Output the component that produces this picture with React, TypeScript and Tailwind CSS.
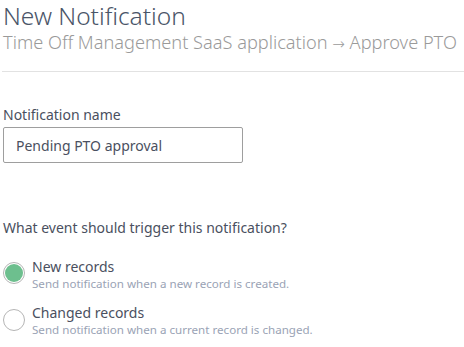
export default function App() {
  const font = { fontFamily: '"Noto Sans", "Open Sans", sans-serif' };
  return (
    <div className="w-[464px] h-[347px] bg-white overflow-hidden" style={font}>
      <div className="pl-[3px] pt-[2px]">
        <div className="text-[24.5px] leading-[28px] text-[#4a5568] font-light">New Notification</div>
        <div className="h-[24px] text-[18.2px] leading-[24px] text-[#9a9a9a] whitespace-nowrap font-light">
          Time Off Management SaaS application{" "}
          <span style={{ fontFamily: '"DejaVu Sans", sans-serif' }} className="text-[15px] leading-[0] font-light">→</span>{" "}
          Approve PTO
        </div>
      </div>
      <div className="ml-[2px] mt-[17px] h-px bg-[#e2e2e2]" />
      <div className="pl-[3px] mt-[33px]">
        <div className="text-[14px] leading-[20px] text-[#4a5060]">Notification name</div>
        <div className="mt-[2px] w-[240px] h-[36px] border border-[#9e9e9e] rounded-[2px] flex items-center pl-[12px] text-[14px] text-[#4a5060]">
          Pending PTO approval
        </div>
      </div>
      <div className="pl-[3px] mt-[55px]">
        <div className="text-[14px] leading-[20px] text-[#4a5060]">What event should trigger this notification?</div>
        <div className="mt-[18px] flex flex-col gap-[13px]">
          <div className="flex items-start gap-[8px]">
            <div className="mt-[6px] w-[22px] h-[22px] rounded-full border border-[#b5b5b5] flex items-center justify-center shrink-0">
              <div className="w-[18px] h-[18px] rounded-full bg-[#6dbf8e]" />
            </div>
            <div className="-ml-[1px] pt-[2px]">
              <div className="text-[14px] leading-[17px] text-[#4a5060]">New records</div>
              <div className="mt-[1px] text-[11.6px] leading-[15px] text-[#9aa3b5]">Send notification when a new record is created.</div>
            </div>
          </div>
          <div className="flex items-start gap-[8px]">
            <div className="mt-[5px] w-[22px] h-[22px] rounded-full border border-[#b5b5b5] shrink-0" />
            <div className="-ml-[1px]">
              <div className="text-[14px] leading-[17px] text-[#4a5060]">Changed records</div>
              <div className="mt-[1px] text-[11.6px] leading-[15px] text-[#9aa3b5]">Send notification when a current record is changed.</div>
            </div>
          </div>
        </div>
      </div>
    </div>
  );
}
